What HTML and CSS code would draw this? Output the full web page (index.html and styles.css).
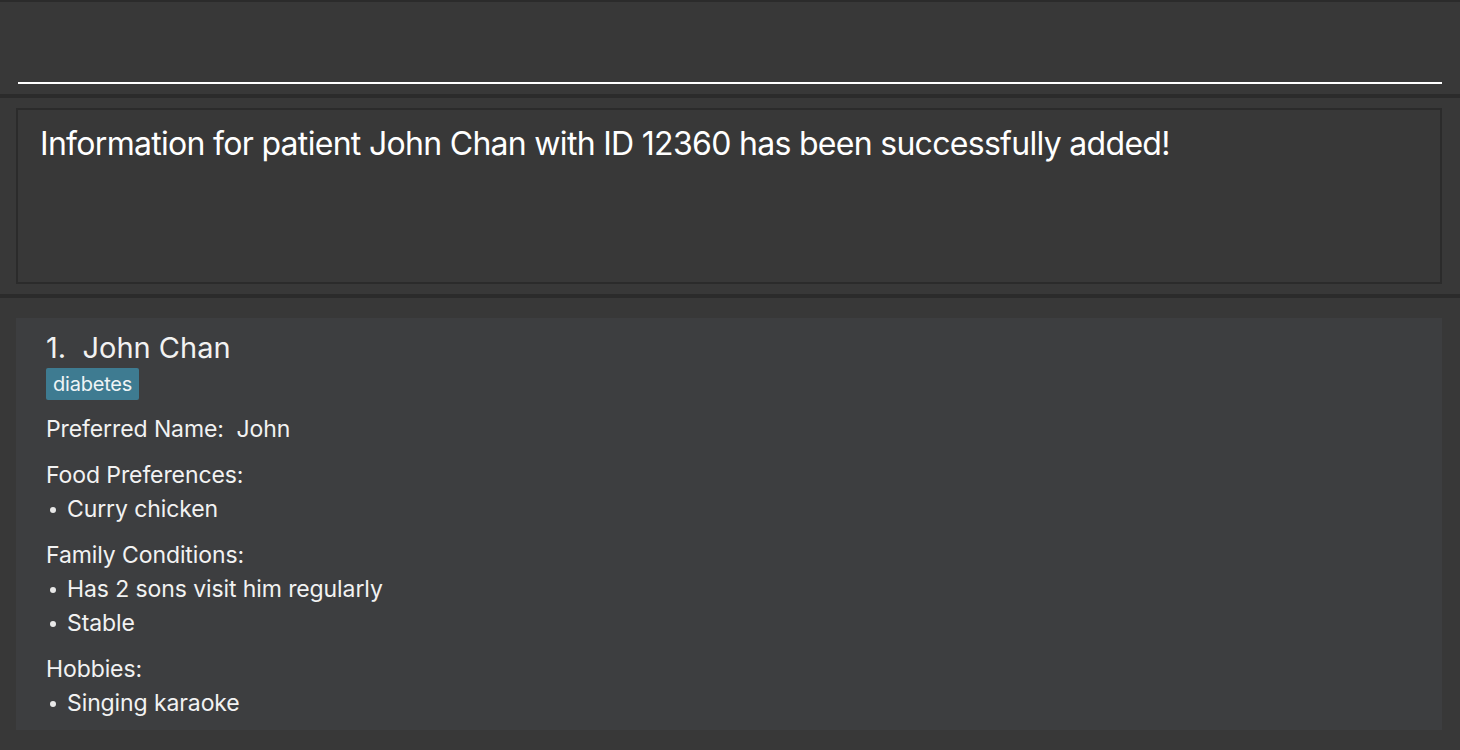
FILE: index.html
```html
<!DOCTYPE html>
<html>
<head>
<meta charset="utf-8">
<link rel="stylesheet" href="styles.css">
</head>
<body>
<div class="app">
  <section class="command">
    <div class="command-input"></div>
  </section>
  <div class="divider"></div>
  <section class="result">
    <div class="result-box">Information for patient John Chan with ID 12360 has been successfully added!</div>
  </section>
  <div class="divider"></div>
  <section class="list">
    <div class="card">
      <div class="name">1.  John Chan</div>
      <div class="tags"><span class="tag">diabetes</span></div>
      <div class="field">Preferred Name:  John</div>
      <div class="group">
        <div class="label">Food Preferences:</div>
        <ul><li>Curry chicken</li></ul>
      </div>
      <div class="group">
        <div class="label">Family Conditions:</div>
        <ul><li>Has 2 sons visit him regularly</li><li>Stable</li></ul>
      </div>
      <div class="group">
        <div class="label">Hobbies:</div>
        <ul><li>Singing karaoke</li></ul>
      </div>
    </div>
  </section>
</div>
</body>
</html>
```
FILE: styles.css
```css
html, body {
  margin: 0;
  padding: 0;
  background: #383838;
  font-family: Inter, "Noto Sans", sans-serif;
  color: #f2f2f2;
}
.app {
  width: 1460px;
  height: 750px;
  overflow: hidden;
  border-top: 2px solid #2b2b2b;
  box-sizing: border-box;
}
.command {
  height: 92px;
  padding: 0 18px;
  display: flex;
  align-items: flex-start;
}
.command-input {
  margin-top: 80px;
  width: 100%;
  height: 0;
  border-bottom: 2px solid #ffffff;
}
.divider {
  height: 4px;
  background: #2b2b2b;
}
.result {
  height: 196px;
  padding: 10px 18px 0 16px;
  box-sizing: border-box;
}
.result-box {
  height: 176px;
  box-sizing: border-box;
  border: 2px solid #2b2b2b;
  padding: 14px 22px;
  font-size: 32px;
  line-height: 40px;
  letter-spacing: -0.7px;
  color: #ffffff;
}
.list {
  padding: 20px 18px 0 16px;
}
.card {
  background: #3d3e40;
  height: 412px;
  padding: 12px 30px 0 30px;
  box-sizing: border-box;
}
.name {
  white-space: pre;
  font-size: 29px;
  line-height: 36px;
  letter-spacing: 0;
}
.tags {
  display: flex;
  margin-top: 2px;
}
.tag {
  background: #3e7b91;
  color: #eef4f6;
  font-size: 20px;
  line-height: 32px;
  padding: 0 7px;
  border-radius: 2px;
  letter-spacing: -0.2px;
}
.field, .label, li {
  font-size: 23px;
  line-height: 34px;
  letter-spacing: -0.1px;
  white-space: pre;
}
.field {
  margin-top: 12px;
}
.group {
  margin-top: 12px;
}
ul {
  list-style: none;
  margin: 0;
  padding: 0;
}
li {
  display: flex;
  align-items: center;
}
li::before {
  content: "";
  width: 6px;
  height: 6px;
  border-radius: 50%;
  background: #e8e8e8;
  margin: 2px 11px 0 4px;
}
```
